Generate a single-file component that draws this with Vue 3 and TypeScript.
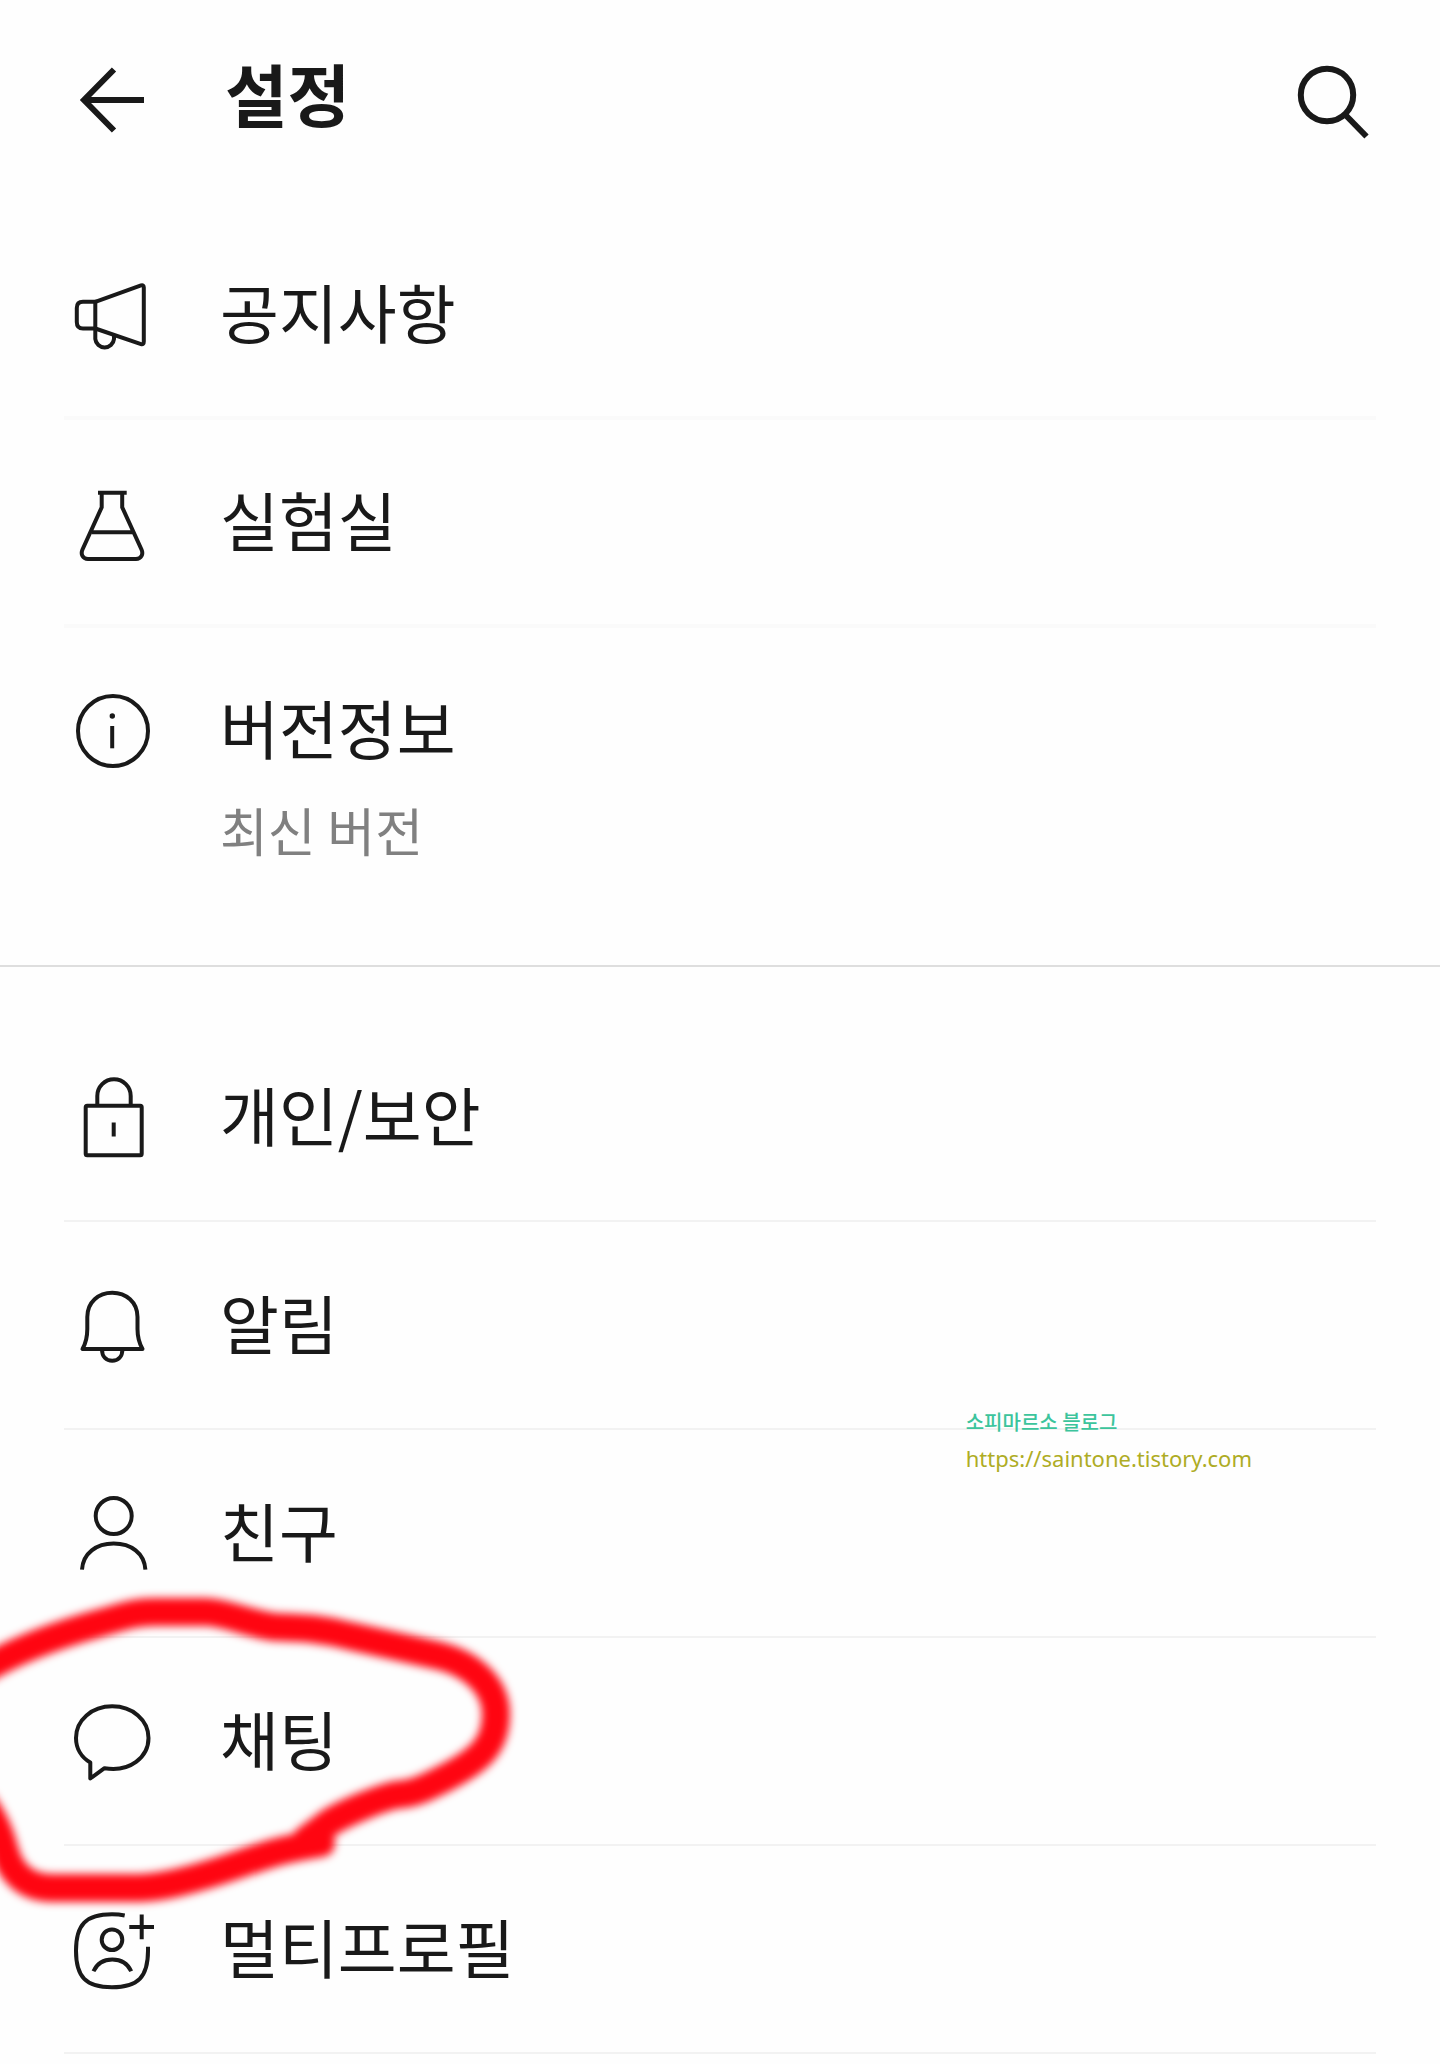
<script setup lang="ts">
type IconName = 'notice' | 'lab' | 'info' | 'lock' | 'bell' | 'friend' | 'chat' | 'profile'

interface SettingItem {
  icon: IconName
  label: string
  note?: string
  marked?: boolean
  credit?: boolean
}

interface SettingGroup {
  id: string
  items: SettingItem[]
}

const groups: SettingGroup[] = [
  {
    id: 'about',
    items: [
      { icon: 'notice', label: '공지사항' },
      { icon: 'lab', label: '실험실' },
      { icon: 'info', label: '버전정보', note: '최신 버전' },
    ],
  },
  {
    id: 'general',
    items: [
      { icon: 'lock', label: '개인/보안' },
      { icon: 'bell', label: '알림', credit: true },
      { icon: 'friend', label: '친구' },
      { icon: 'chat', label: '채팅', marked: true },
      { icon: 'profile', label: '멀티프로필' },
    ],
  },
]
</script>

<template>
  <div class="page">
    <header class="header">
      <button class="icon-button" type="button" aria-label="뒤로">
        <svg class="icon bold" viewBox="0 0 80 80" aria-hidden="true">
          <path d="M42 9.500L12 40L42 70.500M12 40H72" />
        </svg>
      </button>
      <h1 class="title">설정</h1>
      <button class="icon-button" type="button" aria-label="검색">
        <svg class="icon bold" viewBox="0 0 80 80" aria-hidden="true">
          <circle cx="35" cy="35" r="26.200" />
          <path d="M54 55.500L74.500 76.500" />
        </svg>
      </button>
    </header>

    <main>
      <section v-for="group in groups" :key="group.id" class="group" :class="group.id">
        <ul class="list">
          <li v-for="item in group.items" :key="item.icon" class="item">
            <button class="row" type="button">
              <svg class="icon" viewBox="0 0 80 80" aria-hidden="true">
                <g v-if="item.icon === 'notice'">
                  <path d="M23.300 27.800H11Q4.800 27.800 4.800 34V48Q4.800 54.500 11 54.500H23.300Z" />
                  <path d="M23.300 27.800L69 11.400Q71.800 10.500 71.800 13.500V67.500Q71.800 71 69 70.200L23.300 54.500" />
                  <path d="M23.300 54V65A9.400 9.400 0 0 0 42 65V61" />
                </g>
                <g v-else-if="item.icon === 'lab'">
                  <path d="M26 10.700H54.700M29.700 11V25.300L10.500 67.500C8.500 72 10.500 77 16 77H64C69.500 77 71.500 72 69.500 67.500L50.200 25.300V11M20 50.300H60.500" />
                </g>
                <g v-else-if="item.icon === 'info'">
                  <circle cx="41" cy="41" r="35" />
                  <path d="M40.200 36V58.300" />
                  <circle class="solid" cx="40.300" cy="26" r="2.700" />
                </g>
                <g v-else-if="item.icon === 'lock'">
                  <rect x="13.700" y="28.700" width="56" height="49.500" rx="1.500" />
                  <path d="M25.300 28.500V19A16.700 16.700 0 0 1 58.700 19V28.500M41.700 45.500V59.500" />
                </g>
                <g v-else-if="item.icon === 'bell'">
                  <path stroke-linejoin="round" d="M10.500 64H70.500C66 56 65.500 50 65.500 44V32C65.500 17 54 7.700 40.300 7.700S15.300 17 15.300 32V44C15.300 50 15 56 10.500 64Z" />
                  <path d="M30 64.500C30 72 34.500 75.800 40.200 75.800S50.400 72 50.400 64.500" />
                </g>
                <g v-else-if="item.icon === 'friend'">
                  <circle cx="41.700" cy="23" r="18" />
                  <path d="M10 76.700C11 60 24.500 50.500 41.700 50.500S72.400 60 73.400 76.700" />
                </g>
                <g v-else-if="item.icon === 'chat'">
                  <path stroke-linejoin="round" d="M18.300 61.500V77.500L32.500 67.200C58 71.500 76.500 56 76.500 37C76.500 19 60.500 5.300 40.200 5.300S4 19 4 37C4 47.500 9.500 56.500 18.300 61.500Z" />
                </g>
                <g v-else>
                  <path d="M52.700 6.500Q47 5.300 40 5.300C14 5.300 4 15.500 4 41.800S14 78.300 40 78.300S76 68 76 41.800V37.700" />
                  <circle cx="40" cy="30.700" r="10.300" />
                  <path d="M21.500 62.300C25 54.500 31.500 50.500 40.300 50.500S55.700 54.500 59.200 62.300M57.300 18H82M69.700 5.500V30.300" />
                </g>
              </svg>
              <span class="text">
                <span class="label">{{ item.label }}</span>
                <span v-if="item.note" class="note">{{ item.note }}</span>
              </span>
            </button>

            <p v-if="item.credit" class="credit">
              <span class="credit-name">소피마르소 블로그</span>
              <a class="credit-link" href="https://saintone.tistory.com">https://saintone.tistory.com</a>
            </p>

            <!-- Hand-drawn marker loop around the chat entry -->
            <svg v-if="item.marked" class="marker" viewBox="0 0 540 340" aria-hidden="true">
              <path
                d="M-20 92C15 70 60 54 100 43C125 36 135 32 155 32H205C225 32 245 43 275 47C300 48 320 48 350 56L440 76C475 85 496 108 496 134C496 165 480 180 445 198C425 208 415 214 395 215C375 220 345 233 330 242L306 260L321 263C305 266 290 268 270 274C235 285 215 294 180 302Q160 307 140 308H52C20 308 8 285 4 268Q-2 245 -16 225"
              />
            </svg>
          </li>
        </ul>
      </section>
    </main>
  </div>
</template>

<style>
body {
  margin: 0;
  background: #fefefe;
}
</style>

<style scoped>
.page {
  min-height: 100vh;
  overflow: hidden;
  background: #fefefe;
  color: #191919;
  font-family: "Noto Sans CJK KR", "Noto Sans", sans-serif;
}

button {
  margin: 0;
  padding: 0;
  border: 0;
  background: none;
  color: inherit;
  font: inherit;
  text-align: left;
  cursor: pointer;
}

.header {
  display: flex;
  align-items: flex-start;
  padding: 60px 68px 72px 72px;
}

.icon-button {
  flex: none;
  height: 80px;
}

.title {
  flex: 1;
  margin: 0 0 0 73px;
  font-size: 68px;
  font-weight: 700;
  line-height: 66px;
}

.icon {
  display: block;
  flex: none;
  width: 80px;
  height: 80px;
  overflow: visible;
  fill: none;
  stroke: #191919;
  stroke-width: 4;
}

.icon.bold {
  stroke-width: 6;
}

.icon .solid {
  fill: #191919;
  stroke: none;
}

.list {
  margin: 0;
  padding: 0 64px;
  list-style: none;
}

.item {
  position: relative;
  border-bottom: 2px solid #f2f2f2;
}

.row {
  display: flex;
  align-items: flex-start;
  gap: 68px;
  width: 100%;
  padding: 63px 8px;
}

.text {
  display: flex;
  flex-direction: column;
  gap: 40px;
  padding-top: 4px;
}

.label {
  font-size: 64px;
  line-height: 64px;
}

.note {
  color: #808080;
  font-size: 52px;
  line-height: 64px;
}

.about {
  padding-bottom: 41px;
  border-bottom: 2px solid #dedede;
}

.about .item {
  border-bottom: 4px solid #fafafa;
}

.about .item:last-child {
  border-bottom: 0;
}

.about .row {
  padding: 62px 8px;
}

.general {
  padding-top: 47px;
}

.credit {
  position: absolute;
  top: 184px;
  right: 124px;
  z-index: 1;
  display: flex;
  flex-direction: column;
  gap: 4px;
  margin: 0;
  font-size: 20px;
  line-height: 32px;
}

.credit-name {
  color: #3cc49c;
  font-weight: 500;
}

.credit-link {
  color: #aeac24;
  font-family: "Noto Sans", sans-serif;
  font-size: 22px;
  text-decoration: none;
}

.marker {
  position: absolute;
  top: -58px;
  left: -64px;
  z-index: 1;
  width: 540px;
  height: 340px;
  overflow: visible;
  fill: none;
  stroke: #ff0511;
  stroke-width: 28;
  stroke-linejoin: round;
  stroke-linecap: round;
  filter: blur(4px);
  pointer-events: none;
}
</style>
